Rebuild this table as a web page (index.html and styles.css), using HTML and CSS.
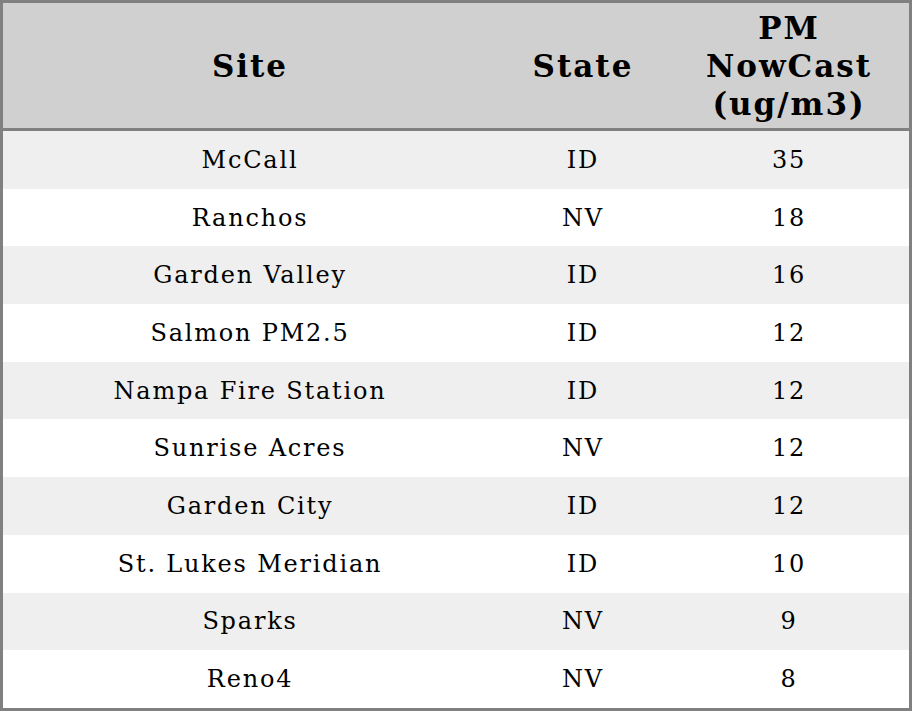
FILE: index.html
```html
<!DOCTYPE html>
<html>
<head>
<meta charset="utf-8">
<link rel="stylesheet" href="styles.css">
</head>
<body>
<table class="aq-table">
  <colgroup>
    <col class="col-site">
    <col class="col-state">
    <col class="col-pm">
  </colgroup>
  <thead>
    <tr class="head-row">
      <th>Site</th>
      <th>State</th>
      <th>PM<br>NowCast<br>(ug/m3)</th>
    </tr>
  </thead>
  <tbody>
    <tr><td>McCall</td><td>ID</td><td>35</td></tr>
    <tr><td>Ranchos</td><td>NV</td><td>18</td></tr>
    <tr><td>Garden Valley</td><td>ID</td><td>16</td></tr>
    <tr><td>Salmon PM2.5</td><td>ID</td><td>12</td></tr>
    <tr><td>Nampa Fire Station</td><td>ID</td><td>12</td></tr>
    <tr><td>Sunrise Acres</td><td>NV</td><td>12</td></tr>
    <tr><td>Garden City</td><td>ID</td><td>12</td></tr>
    <tr><td>St. Lukes Meridian</td><td>ID</td><td>10</td></tr>
    <tr><td>Sparks</td><td>NV</td><td>9</td></tr>
    <tr><td>Reno4</td><td>NV</td><td>8</td></tr>
  </tbody>
</table>
</body>
</html>
```
FILE: styles.css
```css
html, body {
  margin: 0;
  padding: 0;
  background: #ffffff;
}
.aq-table {
  width: 912px;
  height: 711px;
  border-collapse: separate;
  border-spacing: 0;
  border: 3px solid #808080;
  table-layout: fixed;
  font-family: "DejaVu Serif", serif;
  color: #000;
}
.col-site { width: 494px; }
.col-state { width: 172px; }
.col-pm { width: 240px; }
.aq-table th {
  background: #d0d0d0;
  font-size: 31px;
  font-weight: bold;
  line-height: 38px;
  letter-spacing: 2px;
  text-align: center;
  vertical-align: middle;
  padding: 0;
  height: 125px;
  border-bottom: 3px solid #808080;
}
.aq-table td {
  font-size: 24px;
  letter-spacing: 1.8px;
  text-align: center;
  vertical-align: middle;
  padding: 0;
  height: 57.7px;
}
.aq-table tbody tr:nth-child(odd) td {
  background: #efefef;
}
.aq-table tbody tr:nth-child(even) td {
  background: #ffffff;
}
```
